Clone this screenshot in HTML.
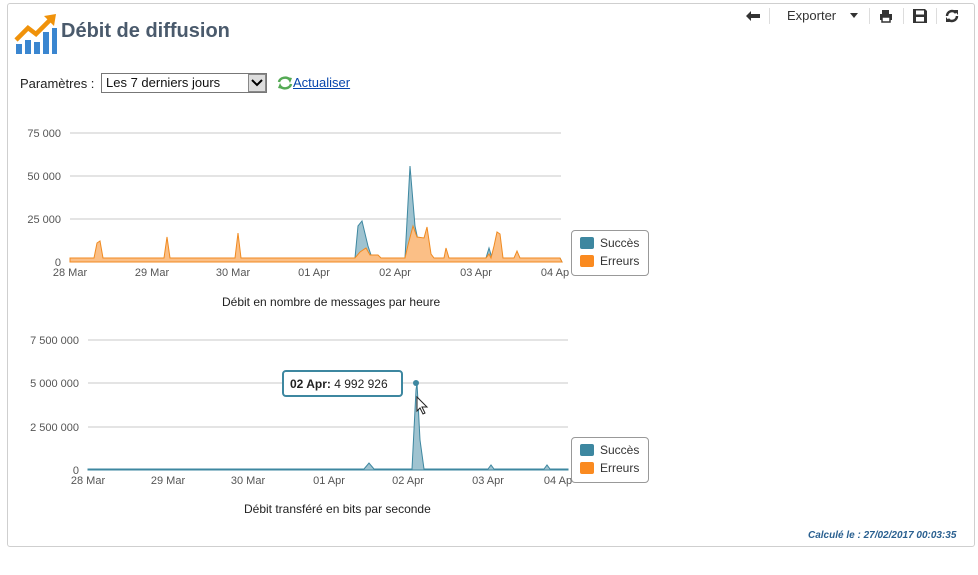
<!DOCTYPE html>
<html><head><meta charset="utf-8"><style>
body{margin:0;width:978px;height:575px;background:#fff;font-family:"Liberation Sans",sans-serif;position:relative;overflow:hidden}
.box{position:absolute;left:7px;top:3px;width:966px;height:542px;border:1px solid #cfcfcf;border-radius:3px}
.a{position:absolute;white-space:nowrap}
.sep{position:absolute;top:8px;width:1px;height:16px;background:#ddd}
</style></head><body>
<div class="box"></div>
<svg class="a" style="left:14px;top:14px" width="44" height="42" viewBox="0 0 44 42">
<rect x="2" y="30" width="6" height="10" fill="#3a86d0"/><rect x="11" y="26" width="6" height="14" fill="#3a86d0"/><rect x="20" y="28" width="6" height="12" fill="#3a86d0"/><rect x="29" y="18" width="6" height="22" fill="#3a86d0"/><rect x="38" y="14" width="5" height="26" fill="#3a86d0"/>
<polyline points="2,26 14,14 22,20 36,6" fill="none" stroke="#f0920a" stroke-width="4.5"/><polygon points="30,2 42,0 40,12" fill="#f0920a"/>
</svg>
<div class="a" style="left:61px;top:20px;font-size:20px;font-weight:bold;color:#4a5a6c">Débit de diffusion</div>
<svg class="a" style="left:745px;top:10px" width="16" height="12" viewBox="0 0 16 12"><path d="M1,6 L6,1 L6,4 L15,4 L15,8 L6,8 L6,11Z" fill="#333"/></svg>
<div class="sep" style="left:769px"></div>
<div class="a" style="left:787px;top:8px;font-size:13px;color:#333">Exporter</div>
<div class="a" style="left:850px;top:13px;border:4px solid transparent;border-top:5px solid #333"></div>
<div class="sep" style="left:869px"></div>
<svg class="a" style="left:879px;top:9px" width="14" height="14" viewBox="0 0 14 14"><path d="M3,1 H10 V5 H3Z M1,5 H13 V11 H1Z" fill="#333"/><rect x="3" y="8" width="8" height="5" fill="#fff" stroke="#333" stroke-width="1.5"/></svg>
<div class="sep" style="left:903px"></div>
<svg class="a" style="left:913px;top:9px" width="14" height="14" viewBox="0 0 14 14"><path d="M0,0 H12 L14,2 V14 H0Z" fill="#333"/><rect x="3" y="1.5" width="8" height="4" fill="#fff"/><rect x="3" y="8" width="8" height="4.5" fill="#fff"/></svg>
<div class="sep" style="left:936px"></div>
<svg class="a" style="left:945px;top:9px" width="14" height="14" viewBox="0 0 14 14"><path d="M2,7 A5,5 0 0 1 11,4" fill="none" stroke="#333" stroke-width="2.5"/><path d="M12,7 A5,5 0 0 1 3,10" fill="none" stroke="#333" stroke-width="2.5"/><path d="M9,1 L13,1 L13,6Z M5,13 L1,13 L1,8Z" fill="#333"/></svg>
<div class="a" style="left:20px;top:76px;font-size:13px;color:#222">Paramètres :</div>
<div class="a" style="left:101px;top:73px;width:166px;height:20px;border:1px solid #777;box-sizing:border-box;font-size:13px;padding:1px 4px;color:#111">Les 7 derniers jours</div>
<div class="a" style="left:248px;top:74px;width:18px;height:18px;background:#ddd;border:1px solid #888;box-sizing:border-box"></div>
<svg class="a" style="left:251px;top:79px" width="12" height="8"><path d="M1,1 L6,6 L11,1" fill="none" stroke="#000" stroke-width="2"/></svg>
<svg class="a" style="left:277px;top:76px" width="16" height="14" viewBox="0 0 16 14"><path d="M2,6 A6,5 0 0 1 13,4" fill="none" stroke="#5a5" stroke-width="2.5"/><path d="M14,8 A6,5 0 0 1 3,10" fill="none" stroke="#5a5" stroke-width="2.5"/><path d="M10,1 L15,2 L13,7Z M6,13 L1,12 L3,7Z" fill="#5a5"/></svg>
<div class="a" style="left:293px;top:75px;font-size:13px;color:#0645ad;text-decoration:underline">Actualiser</div>
<svg class="a" style="left:0;top:0" width="978" height="575" font-family="Liberation Sans" font-size="11" fill="#555">
<g stroke="#c8c8c8"><line x1="70" y1="133" x2="561" y2="133"/><line x1="70" y1="176" x2="561" y2="176"/><line x1="70" y1="219" x2="561" y2="219"/><line x1="70" y1="262" x2="561" y2="262"/>
<line x1="88" y1="340" x2="568" y2="340"/><line x1="88" y1="383" x2="568" y2="383"/><line x1="88" y1="427" x2="568" y2="427"/><line x1="88" y1="470" x2="568" y2="470"/></g>
<g text-anchor="end"><text x="61" y="137">75 000</text><text x="61" y="180">50 000</text><text x="61" y="223">25 000</text><text x="61" y="266">0</text>
<text x="79" y="344">7 500 000</text><text x="79" y="387">5 000 000</text><text x="79" y="431">2 500 000</text><text x="79" y="474">0</text></g>
<g text-anchor="middle"><text x="70" y="276">28 Mar</text><text x="152" y="276">29 Mar</text><text x="233" y="276">30 Mar</text><text x="314" y="276">01 Apr</text><text x="395" y="276">02 Apr</text><text x="476" y="276">03 Apr</text><text x="555" y="276">04 Ap</text>
<text x="88" y="484">28 Mar</text><text x="168" y="484">29 Mar</text><text x="248" y="484">30 Mar</text><text x="329" y="484">01 Apr</text><text x="408" y="484">02 Apr</text><text x="488" y="484">03 Apr</text><text x="558" y="484">04 Ap</text></g>
<path d="M70,262 L70,258 L355,258 L358,226 L362,221 L368,246 L372,258 L405,258 L410,166 L415,226 L420,250 L430,258 L486,258 L489,248 L492,258 L560,258 L562,262Z" fill="#9fc3d0" stroke="#3d87a0"/>
<path d="M70,262 L70,258 L94,258 L97,243 L100,241 L103,258 L164,258 L167,237 L170,258 L235,258 L238,233 L241,258 L355,258 L360,252 L366,248 L370,255 L378,255 L381,258 L405,258 L408,245 L413,226 L417,237 L424,238 L427,227 L431,254 L434,258 L444,258 L446,248 L449,258 L486,258 L489,254 L491,258 L494,246 L497,232 L500,234 L503,258 L514,258 L517,251 L520,258 L560,258 L562,262Z" fill="#fbbf86" stroke="#f08a20"/>
<path d="M88,470 L88,469 L364,469 L369,463 L374,469 L412,469 L416,390 L417,383 L420,440 L424,469 L488,469 L491,465 L494,469 L544,469 L547,465 L550,469 L568,469 L568,470Z" fill="#9fc3d0" stroke="#3d87a0"/>
<circle cx="416" cy="383" r="3" fill="#3d87a0"/>
<path d="M417,397 L417,411 L420,408 L423,414 L425,413 L422,407 L427,407Z" fill="#fff" stroke="#222"/>
</svg>
<div class="a" style="left:571px;top:230px;width:76px;height:44px;border:1px solid #999;border-radius:4px;background:#fff;font-size:12px;color:#333">
<div style="position:absolute;left:8px;top:6px;width:14px;height:12px;background:#3d87a0;border-radius:2px"></div><div style="position:absolute;left:28px;top:5px">Succès</div>
<div style="position:absolute;left:8px;top:24px;width:14px;height:12px;background:#fa8a20;border-radius:2px"></div><div style="position:absolute;left:28px;top:23px">Erreurs</div></div>
<div class="a" style="left:571px;top:437px;width:76px;height:44px;border:1px solid #999;border-radius:4px;background:#fff;font-size:12px;color:#333">
<div style="position:absolute;left:8px;top:6px;width:14px;height:12px;background:#3d87a0;border-radius:2px"></div><div style="position:absolute;left:28px;top:5px">Succès</div>
<div style="position:absolute;left:8px;top:24px;width:14px;height:12px;background:#fa8a20;border-radius:2px"></div><div style="position:absolute;left:28px;top:23px">Erreurs</div></div>
<div class="a" style="left:282px;top:370px;width:121px;height:27px;box-sizing:border-box;border:2px solid #3d87a0;border-radius:4px;background:#fff;font-size:12px;color:#222;padding:5px 6px"><b>02 Apr:</b> 4 992 926</div>
<div class="a" style="left:222px;top:295px;font-size:12px;color:#222">Débit en nombre de messages par heure</div>
<div class="a" style="left:244px;top:502px;font-size:12px;color:#222">Débit transféré en bits par seconde</div>
<div class="a" style="left:808px;top:530px;font-size:10px;font-weight:bold;font-style:italic;color:#2a6090">Calculé le : 27/02/2017 00:03:35</div>
</body></html>
